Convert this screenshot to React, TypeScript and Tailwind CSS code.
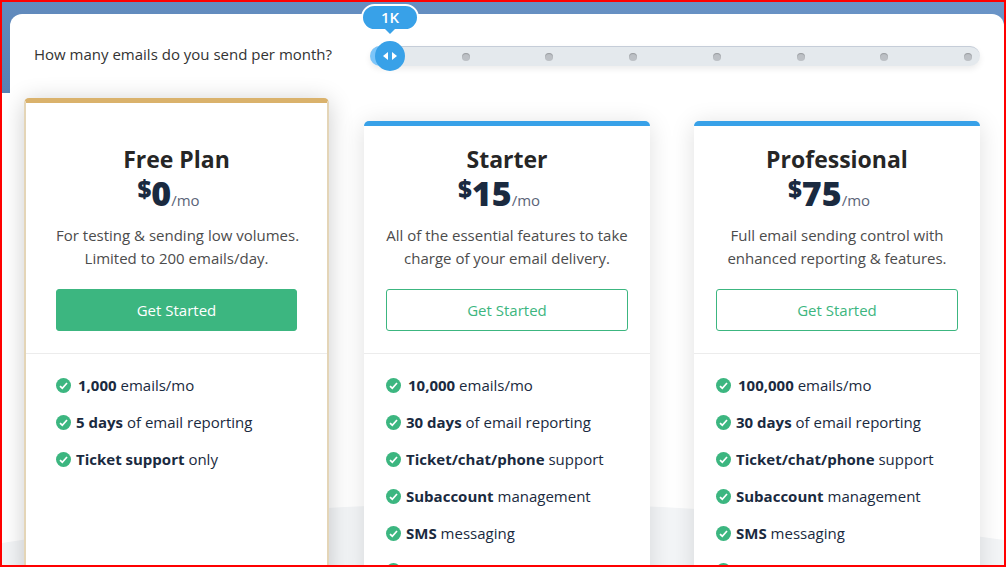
import { useState } from 'react'
import clsx from 'clsx'

const VOLUMES = ['1K', '10K', '50K', '100K', '250K', '500K', '1M', '2M']

type Feature = { bold: string; rest: string }

type Plan = {
  name: string
  price: number
  description: [string, string]
  featured?: boolean
  features: Feature[]
}

const plans: Plan[] = [
  {
    name: 'Free Plan',
    price: 0,
    description: ['For testing & sending low volumes.', 'Limited to 200 emails/day.'],
    featured: true,
    features: [
      { bold: '1,000', rest: 'emails/mo' },
      { bold: '5 days', rest: 'of email reporting' },
      { bold: 'Ticket support', rest: 'only' }
    ]
  },
  {
    name: 'Starter',
    price: 15,
    description: ['All of the essential features to take', 'charge of your email delivery.'],
    features: [
      { bold: '10,000', rest: 'emails/mo' },
      { bold: '30 days', rest: 'of email reporting' },
      { bold: 'Ticket/chat/phone', rest: 'support' },
      { bold: 'Subaccount', rest: 'management' },
      { bold: 'SMS', rest: 'messaging' },
      { bold: '', rest: '' }
    ]
  },
  {
    name: 'Professional',
    price: 75,
    description: ['Full email sending control with', 'enhanced reporting & features.'],
    features: [
      { bold: '100,000', rest: 'emails/mo' },
      { bold: '30 days', rest: 'of email reporting' },
      { bold: 'Ticket/chat/phone', rest: 'support' },
      { bold: 'Subaccount', rest: 'management' },
      { bold: 'SMS', rest: 'messaging' },
      { bold: '', rest: '' }
    ]
  }
]

function CheckIcon() {
  return (
    <svg width="15" height="15" viewBox="0 0 15 15" className="shrink-0" aria-hidden="true">
      <circle cx="7.5" cy="7.5" r="7.5" fill="#3cb680" />
      <path d="M4 8.1 L6.3 10.2 L11 5" fill="none" stroke="#fff" strokeWidth="1.7" />
    </svg>
  )
}

function VolumeSlider() {
  const [step, setStep] = useState(0)
  const ratio = step / (VOLUMES.length - 1)

  return (
    <div className="relative h-5 flex-1 rounded-full border-t border-[#c5cdd8] bg-[#e4e9ed] shadow-[0_3px_6px_rgba(0,0,0,0.08)]">
      <div className="flex h-full items-center justify-between px-2 pt-px">
        {VOLUMES.map((v) => (
          <span key={v} className="size-2 rounded-full bg-[#bcc0c5] shadow-[inset_0_1px_1px_rgba(0,0,0,0.2)]" />
        ))}
      </div>
      {/* filled part, handle and value bubble */}
      <div
        className="absolute -top-px left-0 h-5 rounded-l-full bg-[#7cc5f9]"
        style={{ width: `calc(20px + (100% - 33px) * ${ratio})` }}
      />
      <div
        className="absolute -top-1.5 flex size-[30px] -translate-x-1/2 items-center justify-center rounded-full bg-[#38a1e8]"
        style={{ left: `calc(20px + (100% - 33px) * ${ratio})` }}
      >
        <svg width="14" height="8" viewBox="0 0 14 8" fill="#fff" aria-hidden="true">
          <path d="M5 0 L0 4 L5 8 Z M9 0 L14 4 L9 8 Z" />
        </svg>
        <output
          htmlFor="volume"
          className="absolute bottom-10 flex h-[27px] w-[58px] items-center justify-center rounded-full border-2 border-white bg-[#38a1e8] text-[15px] font-semibold text-white"
        >
          {VOLUMES[step]}
          <span className="absolute top-full border-x-5 border-t-5 border-x-transparent border-t-[#38a1e8]" />
        </output>
      </div>
      <input
        id="volume"
        type="range"
        min={0}
        max={VOLUMES.length - 1}
        value={step}
        onChange={(e) => setStep(Number(e.target.value))}
        className="absolute inset-0 w-full cursor-pointer opacity-0"
      />
    </div>
  )
}

function PlanCard({ plan }: { plan: Plan }) {
  return (
    <article
      className={clsx(
        'rounded-t-[5px] border-t-5 bg-white',
        plan.featured
          ? '-mt-[23px] -mr-[9px] -ml-2.5 border-x-2 border-x-[#e4d5b7] border-t-[#dab26c] pt-[23px] shadow-[0_3px_24px_rgba(0,0,0,0.2)]'
          : 'border-t-[#38a1e8] shadow-[0_3px_24px_rgba(0,0,0,0.13)]'
      )}
    >
      <div className={clsx('border-b border-[#ececec] pt-[17px] pb-[22px] text-center', plan.featured ? 'px-[30px]' : 'px-[22px]')}>
        <h2 className="text-[23px] leading-8 font-bold text-[#262626]">{plan.name}</h2>
        <p className="flex h-9 items-baseline justify-center pr-4 leading-9 text-[#1a2a40]">
          <span className="self-start text-2xl leading-7 font-extrabold">$</span>
          <span className="text-[34px] font-extrabold">{plan.price}</span>
          <span className="text-[15px] text-[#5b6478]">/mo</span>
        </p>
        <p className="mt-[13px] text-[15px] leading-[23px] whitespace-nowrap text-[#4c4c4c]">
          {plan.description[0]}
          <br />
          {plan.description[1]}
        </p>
        <button
          type="button"
          className={clsx(
            'mt-[19px] h-[42px] w-full cursor-pointer rounded-[3px] border border-[#3cb680] text-[15px]',
            plan.featured ? 'bg-[#3cb680] text-white' : 'bg-white text-[#3cb680]'
          )}
        >
          Get Started
        </button>
      </div>
      <ul className={clsx('flex flex-col gap-[15px] pt-5', plan.featured ? 'px-[30px]' : 'px-[22px]')}>
        {plan.features.map((f, i) => (
          <li key={i} className="flex h-[22px] items-center gap-[5px] text-[15px] leading-[22px] whitespace-nowrap text-[#1a2a40]">
            <CheckIcon />
            <span className={clsx(i === 0 && 'pl-0.5')}>
              <strong className="font-bold">{f.bold}</strong> {f.rest}
            </span>
          </li>
        ))}
      </ul>
    </article>
  )
}

export default function App() {
  return (
    <div className="relative isolate h-screen overflow-hidden border-2 border-[#ff0000] bg-white bg-[linear-gradient(to_top_right,#5881b3,#6b95c8)] bg-[length:100%_91px] bg-no-repeat pt-3 pl-2 font-['Open_Sans','Noto_Sans',sans-serif]">
      <main className="flex h-full flex-col rounded-t-xl bg-white pr-6 pl-6">
        <div className="flex items-start pt-8">
          <label htmlFor="volume" className="w-[336px] shrink-0 text-[15px] leading-4 text-[#333333]">
            How many emails do you send per month?
          </label>
          <VolumeSlider />
        </div>
        <section className="z-10 mt-[55px] grid flex-1 grid-cols-3 gap-11">
          {plans.map((plan) => (
            <PlanCard key={plan.name} plan={plan} />
          ))}
        </section>
      </main>
      {/* grey hill behind the cards */}
      <svg className="absolute bottom-0 left-0 h-[62px] w-full" viewBox="0 0 1002 62" preserveAspectRatio="none" aria-hidden="true">
        <path d="M0 40 C160 14 330 0 500 0 S850 15 1002 37 V62 H0 Z" fill="#f3f5f7" />
      </svg>
    </div>
  )
}
